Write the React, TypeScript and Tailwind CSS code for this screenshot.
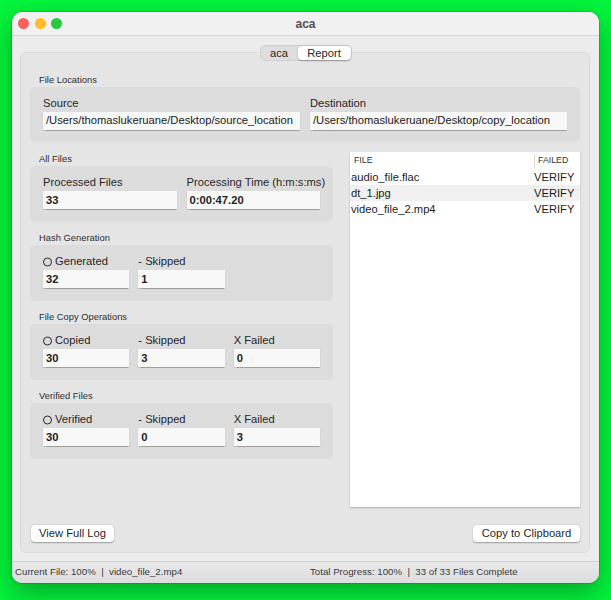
import React from "react";

const font = { fontFamily: '"Liberation Sans", Arial, sans-serif' };

function Radio() {
  return <span className="inline-block w-[9px] h-[9px] rounded-full border-[1.3px] border-[#2a2a2a] mr-[3px] translate-y-[0.5px]" />;
}

function Field({ label, value, radio, plain }: { label: string; value: string; radio?: boolean; plain?: boolean }) {
  return (
    <div className="flex flex-col">
      <div className="h-[17px] leading-[17px] text-[11.2px] text-[#262626] flex items-center whitespace-nowrap">
        {radio && <Radio />}
        {label}
      </div>
      <div
        className={`h-[18px] bg-[#f8f8f8] shadow-[0_0.5px_1px_rgba(0,0,0,0.28)] pl-[3px] flex items-center text-[11.2px] whitespace-nowrap overflow-hidden ${plain ? "font-normal text-[#202020]" : "font-bold text-[#1e1e1e]"}`}
      >
        {value}
      </div>
    </div>
  );
}

function SectionLabel({ children, first }: { children: React.ReactNode; first?: boolean }) {
  return (
    <div className={`${first ? "h-[24px] pt-[11px]" : "h-[23px] pt-[10px]"} pl-[9px] text-[9.4px] leading-[11px] text-[#2e2e2e]`}>
      {children}
    </div>
  );
}

function Group({ cols, children }: { cols: 2 | 3; children: React.ReactNode }) {
  return (
    <div
      className={`h-[56px] rounded-[5px] bg-[#dcdcdc] px-[13px] pt-[8px] grid ${cols === 2 ? "grid-cols-2 gap-x-[10px]" : "grid-cols-3 gap-x-[9px]"}`}
    >
      {children}
    </div>
  );
}

export default function App() {
  const rows = [
    { f: "audio_file.flac", s: "VERIFY" },
    { f: "dt_1.jpg", s: "VERIFY" },
    { f: "video_file_2.mp4", s: "VERIFY" },
  ];
  return (
    <div className="w-[611px] h-[600px] bg-[#03f43c] pt-[12px] pl-[12px] overflow-hidden" style={font}>
      <div className="w-[587px] h-[571px] rounded-[10px] bg-[#ececec] shadow-[0_10px_26px_rgba(0,0,0,0.32),0_0_0_0.5px_rgba(0,0,0,0.25)] flex flex-col overflow-hidden">
        {/* title bar */}
        <div className="relative h-[24px] bg-[#f1f1f1] border-b border-[#d6d6d6] flex items-center shrink-0">
          <div className="flex gap-[5.5px] ml-[6px]">
            <span className="w-[11px] h-[11px] rounded-full bg-[#fe5f57]" />
            <span className="w-[11px] h-[11px] rounded-full bg-[#febc2e]" />
            <span className="w-[11px] h-[11px] rounded-full bg-[#28c840]" />
          </div>
          <div className="absolute inset-0 flex items-center justify-center text-[12px] font-bold text-[#505050]">aca</div>
        </div>

        {/* segmented control */}
        <div className="relative z-10 flex justify-center mt-[9px] shrink-0">
          <div className="flex h-[16px] rounded-[5px] bg-[#dedede] border border-[#d0d0d0] text-[11.2px] text-[#262626]">
            <div className="w-[37px] flex items-center justify-center">aca</div>
            <div className="w-[53px] flex items-center justify-center bg-white rounded-[4px] shadow-[0_0.5px_1.5px_rgba(0,0,0,0.3)]">Report</div>
          </div>
        </div>

        {/* panel */}
        <div className="-mt-[9px] ml-[8px] w-[570px] h-[501px] rounded-[6px] bg-[#e5e5e5] border border-[#dbdbdb] px-[9px] pt-[11px] pb-[10px] flex flex-col shrink-0">
          <SectionLabel>File Locations</SectionLabel>
          <Group cols={2}>
            <Field label="Source" value="/Users/thomaslukeruane/Desktop/source_location" plain />
            <Field label="Destination" value="/Users/thomaslukeruane/Desktop/copy_location" plain />
          </Group>
          <div className="flex gap-[17px] h-[365px]">
            <div className="w-[303px] flex flex-col">
              <SectionLabel first>All Files</SectionLabel>
              <Group cols={2}>
                <Field label="Processed Files" value="33" />
                <Field label="Processing Time (h:m:s:ms)" value="0:00:47.20" />
              </Group>
              <SectionLabel>Hash Generation</SectionLabel>
              <Group cols={3}>
                <Field label="Generated" value="32" radio />
                <Field label="- Skipped" value="1" />
              </Group>
              <SectionLabel>File Copy Operations</SectionLabel>
              <Group cols={3}>
                <Field label="Copied" value="30" radio />
                <Field label="- Skipped" value="3" />
                <Field label="X Failed" value="0" />
              </Group>
              <SectionLabel>Verified Files</SectionLabel>
              <Group cols={3}>
                <Field label="Verified" value="30" radio />
                <Field label="- Skipped" value="0" />
                <Field label="X Failed" value="3" />
              </Group>
            </div>
            <div className="mt-[10px] w-[230px] h-[355px] bg-white shadow-[0_1px_1.5px_rgba(0,0,0,0.25)]">
              <div className="flex h-[17px] items-center text-[8.8px] text-[#333]">
                <div className="w-[184px] pl-[4px]">FILE</div>
                <div className="h-[14px] border-l border-[#dcdcdc] pl-[3px] flex items-center">FAILED</div>
              </div>
              {rows.map((r, i) => (
                <div key={r.f} className={`flex h-[16px] items-center text-[11.2px] text-[#1c1c1c] ${i === 1 ? "bg-[#f0f0f0]" : ""}`}>
                  <div className="w-[184px] pl-[1px]">{r.f}</div>
                  <div>{r.s}</div>
                </div>
              ))}
            </div>
          </div>
          <div className="mt-[18px] h-[17px] flex justify-between pl-[1px] pr-[0px]">
            <button className="w-[83px] h-[17px] bg-white rounded-[4px] shadow-[0_0.5px_1.5px_rgba(0,0,0,0.32)] text-[11.2px] text-[#1f1f1f] flex items-center justify-center">View Full Log</button>
            <button className="w-[107px] h-[17px] bg-white rounded-[4px] shadow-[0_0.5px_1.5px_rgba(0,0,0,0.32)] text-[11.2px] text-[#1f1f1f] flex items-center justify-center">Copy to Clipboard</button>
          </div>
        </div>

        {/* status bar */}
        <div className="mt-[8px] flex-1 border-t border-[#d2d2d2] bg-gradient-to-b from-[#e9e9e9] to-[#dcdcdc] flex items-center px-[3px] text-[9.7px] text-[#3a3a3a] whitespace-pre">
          <div className="w-[295px]">Current File: 100%  |  video_file_2.mp4</div>
          <div>Total Progress: 100%  |  33 of 33 Files Complete</div>
        </div>
      </div>
    </div>
  );
}
